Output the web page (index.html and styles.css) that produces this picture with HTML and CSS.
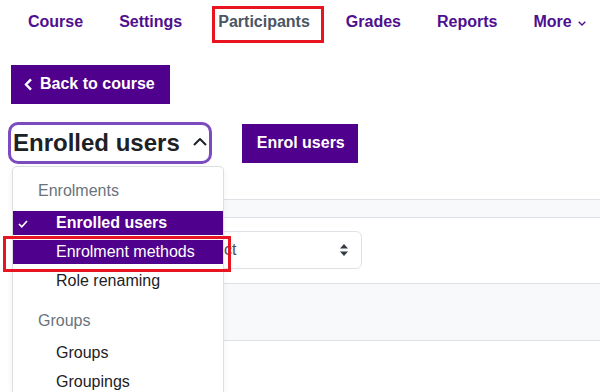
FILE: index.html
```html
<!DOCTYPE html>
<html lang="en">
<head>
<meta charset="utf-8">
<title>Participants</title>
<link rel="stylesheet" href="styles.css">
</head>
<body>
<nav class="tabs">
  <a class="tab">Course</a>
  <a class="tab">Settings</a>
  <a class="tab active">Participants</a>
  <a class="tab">Grades</a>
  <a class="tab">Reports</a>
  <a class="tab more">More<svg class="more-chev" width="8" height="5" viewBox="0 0 8 5"><path d="M0.7 0.7 L4 4 L7.3 0.7" fill="none" stroke="#4f0f8f" stroke-width="1.4"/></svg></a>
</nav>
<div class="page">
  <a class="btn back"><svg width="9" height="13" viewBox="0 0 9 13"><path d="M7 1.3 L2 6.5 L7 11.7" fill="none" stroke="#fff" stroke-width="2.4"/></svg><span>Back to course</span></a>
  <div class="header-row">
    <div class="title-select"><span>Enrolled users</span><svg width="14" height="8" viewBox="0 0 14 8"><path d="M1 7 L7 1 L13 7" fill="none" stroke="#1d2125" stroke-width="2"/></svg></div>
    <a class="btn enrol">Enrol users</a>
  </div>
  <div class="band thin"></div>
  <div class="filter-row">
    <div class="select"><span>Select</span><svg width="8" height="12" viewBox="0 0 8 12"><polygon points="4,0 8,4.6 0,4.6" fill="#343a40"/><polygon points="0,7.4 8,7.4 4,12" fill="#343a40"/></svg></div>
  </div>
  <div class="band tall"></div>
  <div class="menu">
    <div class="menu-head">Enrolments</div>
    <div class="menu-item active"><svg class="check" width="10" height="8" viewBox="0 0 10 8"><path d="M1 4 L3.8 6.8 L9 1" fill="none" stroke="#fff" stroke-width="1.6"/></svg>Enrolled users</div>
    <div class="menu-item hl">Enrolment methods</div>
    <div class="menu-item">Role renaming</div>
    <div class="menu-head second">Groups</div>
    <div class="menu-item">Groups</div>
    <div class="menu-item">Groupings</div>
  </div>
</div>
</body>
</html>
```
FILE: styles.css
```css
html,
body {
  margin: 0;
  height: 392px;
  overflow: hidden;
}

body {
  font-family: "Liberation Sans", Arial, sans-serif;
  color: #1d2125;
  background: #fff;
}

.tabs {
  display: flex;
  gap: 36px;
  height: 65px;
  box-sizing: border-box;
  padding: 10px 0 0 28px;
}

.tab {
  position: relative;
  display: flex;
  align-items: center;
  height: 24px;
  font-size: 16px;
  line-height: 24px;
  font-weight: bold;
  color: #4f0f8f;
}

.tab.active {
  color: #4b5563;
}

.tab.active::after {
  content: "";
  position: absolute;
  left: -6px;
  top: -4px;
  width: 112px;
  height: 37px;
  border: 3px solid #e8141f;
  box-sizing: border-box;
}

.more-chev {
  margin-left: 6px;
  margin-top: 2px;
}

.page {
  position: relative;
  height: 327px;
  padding-left: 11px;
}

.btn {
  display: inline-flex;
  align-items: center;
  height: 39px;
  box-sizing: border-box;
  background: #4f008c;
  color: #fff;
  font-size: 16px;
  line-height: 24px;
  font-weight: bold;
  text-decoration: none;
}

.back {
  gap: 7px;
  padding: 0 15px 1px 13px;
}

.header-row {
  display: flex;
  align-items: center;
  margin-top: 18px;
}

.title-select {
  display: flex;
  align-items: center;
  gap: 13px;
  margin-left: -3px;
  height: 42px;
  box-sizing: border-box;
  padding: 0 2px 0 2px;
  border: 3px solid #7b4bbf;
  border-radius: 10px;
  font-size: 24px;
  line-height: 36px;
  font-weight: bold;
  color: #1d2125;
}

.title-select svg {
  margin-top: -3px;
}

.enrol {
  margin-left: 30px;
  padding: 0 13px 0 15px;
}

.band {
  margin-left: 9px;
  background: #f8f9fa;
  border-top: 1px solid #dee2e6;
  border-bottom: 1px solid #dee2e6;
}

.band.thin {
  height: 17px;
  margin-top: 35px;
}

.band.tall {
  height: 56px;
}

.filter-row {
  padding: 13px 0 14px;
}

.select {
  display: flex;
  align-items: center;
  justify-content: space-between;
  margin-left: 169px;
  width: 182px;
  height: 38px;
  box-sizing: border-box;
  padding: 0 13px 0 11px;
  border: 1px solid #dee2e6;
  border-radius: 6px;
  font-size: 16px;
  color: #495057;
}

.menu {
  position: absolute;
  top: 101px;
  left: 12px;
  width: 212px;
  height: 226px;
  box-sizing: border-box;
  padding-top: 12px;
  background: #fff;
  border: 1px solid rgba(0, 0, 0, 0.13);
  border-bottom: 0;
  border-radius: 5px 5px 0 0;
  box-shadow: 0 2px 6px rgba(0, 0, 0, 0.06);
}

.menu-head {
  padding-left: 25px;
  margin-bottom: 8px;
  font-size: 16px;
  line-height: 24px;
  color: #6a737b;
}

.menu-head.second {
  margin-top: 16px;
}

.menu-item {
  position: relative;
  height: 24px;
  margin-bottom: 5px;
  padding-left: 43px;
  font-size: 16px;
  line-height: 24px;
  color: #1d2125;
}

.menu-item.active {
  background: #4f008c;
  color: #fff;
  font-weight: bold;
}

.menu-item.hl {
  background: #4f008c;
  color: #fff;
}

.menu-item.hl::after {
  content: "";
  position: absolute;
  left: -10px;
  top: -4px;
  width: 228px;
  height: 36px;
  border: 3px solid #e8141f;
  box-sizing: border-box;
}

.check {
  position: absolute;
  left: 5px;
  top: 9px;
}
```
